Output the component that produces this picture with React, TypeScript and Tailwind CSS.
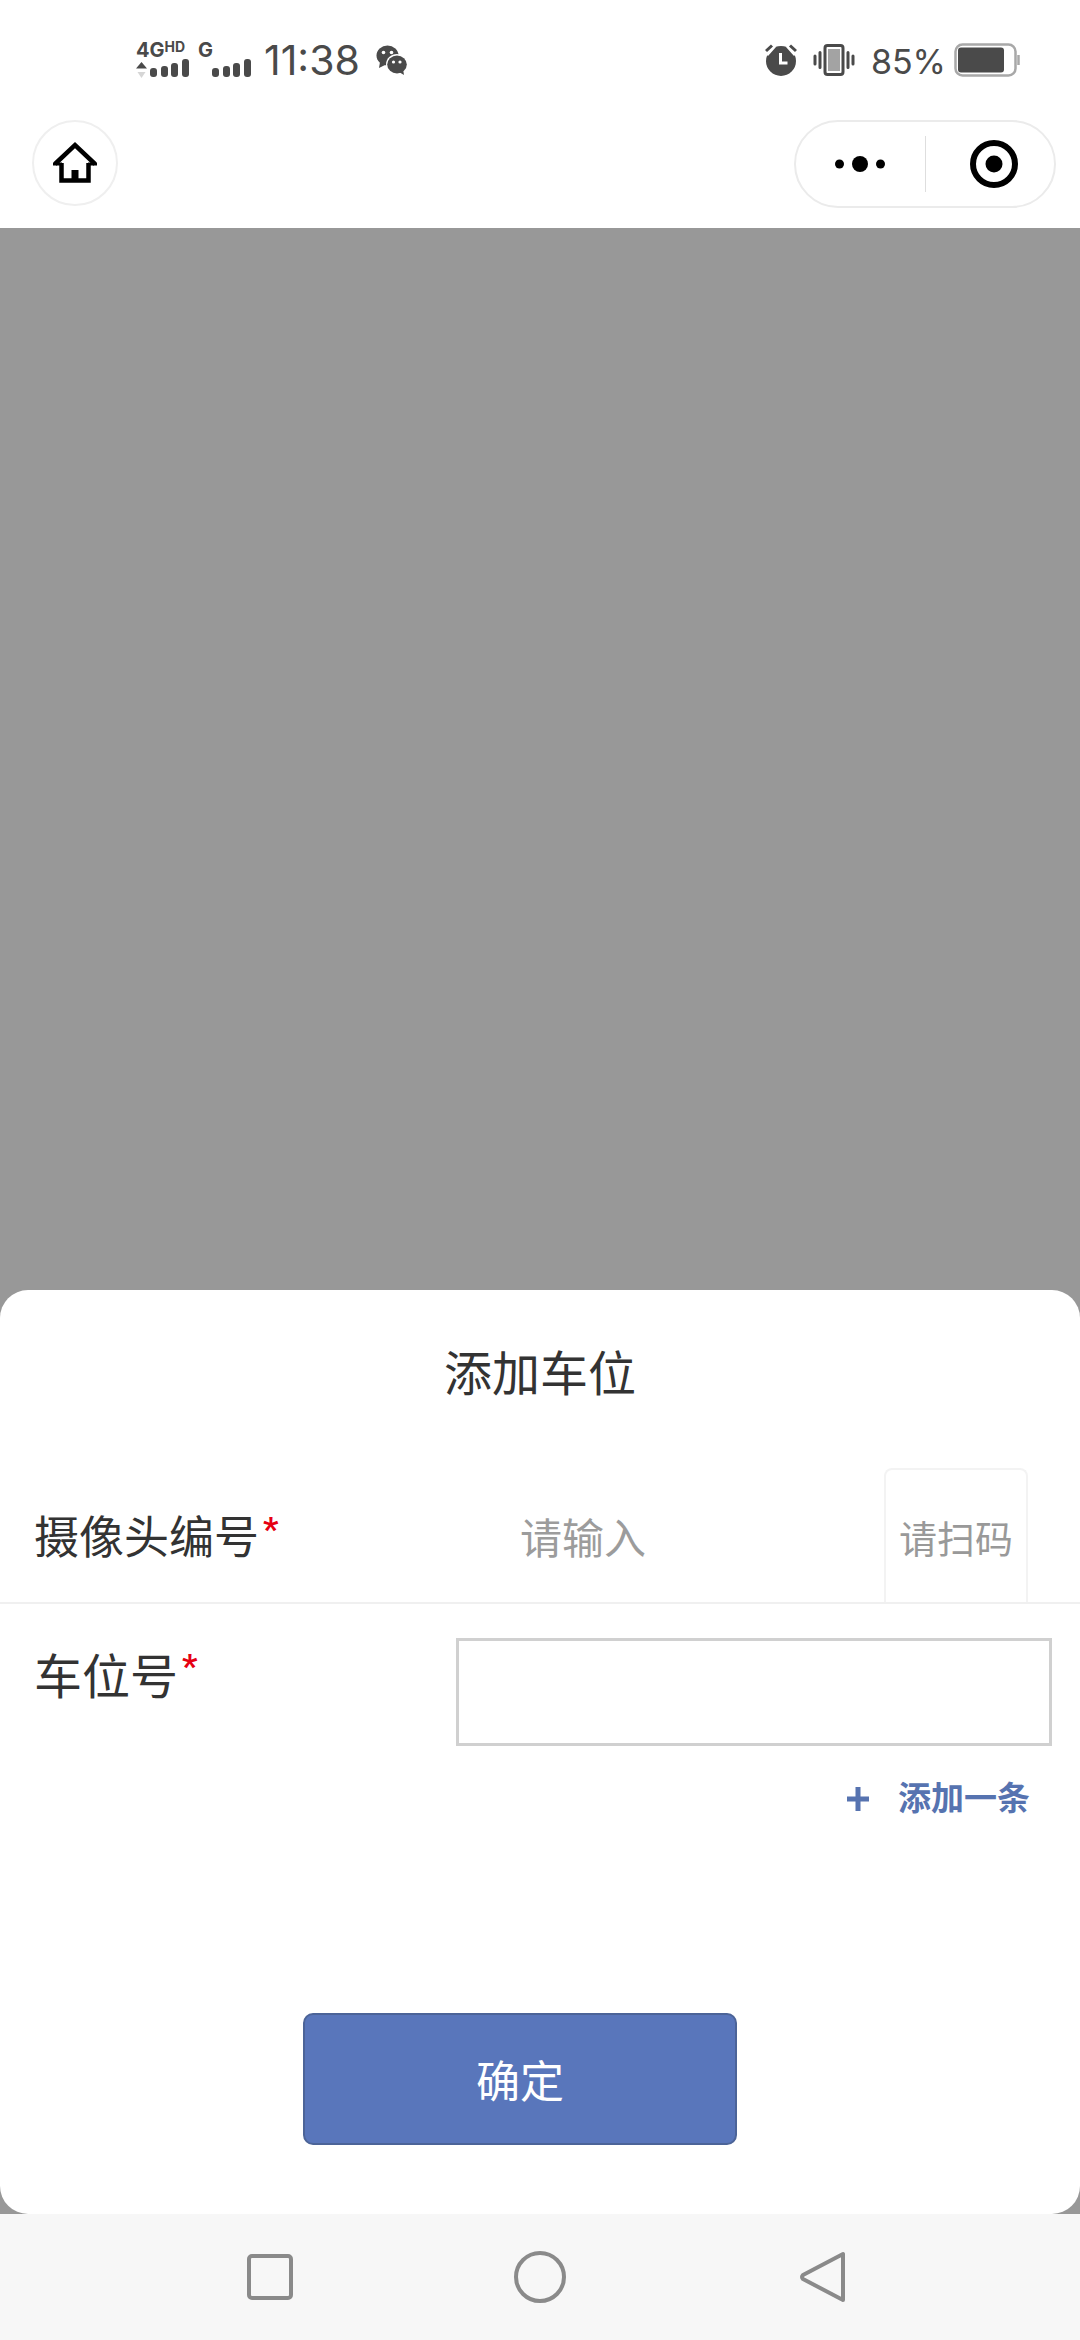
import { useState } from "react";

const font = "font-['Roboto','Noto_Sans_CJK_SC',sans-serif]";

function SignalBars({ arrows = false }: { arrows?: boolean }) {
    return (
        <svg className="h-5 w-[54px]" viewBox="0 0 54 20" fill="#4a4a4a" aria-hidden="true">
            {arrows && (
                <>
                    <path d="M0 9.5 5.5 3 11 9.5z" />
                    <path d="M1.5 13h8L5.5 19z" fill="#d6d6d6" />
                </>
            )}
            <rect x="14" y="9" width="7" height="9" rx="3" />
            <rect x="25" y="7" width="7" height="11" rx="3" />
            <rect x="35" y="4" width="7" height="14" rx="3" />
            <rect x="46" y="0" width="7" height="18" rx="3" />
        </svg>
    );
}

function WechatIcon() {
    return (
        <svg className="ml-2 h-[30px] w-8" viewBox="0 0 32 30" aria-hidden="true">
            <g fill="#4a4a4a">
                <ellipse cx="11.5" cy="10.5" rx="11" ry="10" />
                <path d="M4 17l-1 6 6-3z" />
            </g>
            <circle cx="7.5" cy="7.5" r="1.8" fill="#fff" />
            <circle cx="15.5" cy="7.5" r="1.8" fill="#fff" />
            <ellipse cx="21" cy="19.5" rx="11" ry="10.5" fill="#fff" />
            <g fill="#4a4a4a">
                <ellipse cx="21" cy="19.5" rx="9.8" ry="9" />
                <path d="M23 27l5 3-1-6z" />
            </g>
            <circle cx="17.5" cy="17" r="1.6" fill="#fff" />
            <circle cx="24" cy="17" r="1.6" fill="#fff" />
        </svg>
    );
}

function AlarmIcon() {
    return (
        <svg className="h-8 w-8" viewBox="0 0 32 32" fill="none" aria-hidden="true">
            <circle cx="16" cy="17" r="15" fill="#4a4a4a" />
            <path d="M0 9 8 0l3 3-8 9zM32 9l-8-9-3 3 8 9z" fill="#fff" />
            <path d="M1 7 7 1.5M25 1.5 31 7" stroke="#4a4a4a" strokeWidth="3" />
            <path d="M15.5 9v10h7" stroke="#fff" strokeWidth="3" />
        </svg>
    );
}

function VibrateIcon() {
    return (
        <svg className="h-8 w-[42px]" viewBox="0 0 42 32" fill="none" stroke="#4a4a4a" aria-hidden="true">
            <rect x="12" y="1.5" width="18" height="29" rx="2.5" strokeWidth="3" />
            <rect x="15" y="5" width="12" height="22" fill="#a3a3a3" stroke="none" />
            <path d="M7 8.5v15M35 8.5v15" strokeWidth="3" strokeLinecap="round" />
            <path d="M2 12v8M40 12v8" strokeWidth="3" strokeLinecap="round" />
        </svg>
    );
}

function BatteryIcon() {
    return (
        <svg className="h-[34px] w-[66px]" viewBox="0 0 66 34" fill="none" aria-hidden="true">
            <rect x="1.5" y="1.5" width="60" height="31" rx="7" stroke="#a8a8a8" strokeWidth="2.5" />
            <rect x="4" y="4.5" width="46" height="25" rx="3" fill="#4a4a4a" />
            <path d="M64.5 12v10" stroke="#a8a8a8" strokeWidth="2.5" />
        </svg>
    );
}

function StatusBar() {
    return (
        <div className="flex h-[120px] items-center justify-between pl-[136px] pr-[60px] font-['Inter',sans-serif] text-[#4a4a4a]">
            <div className="flex items-center gap-2">
                <div className="flex flex-col">
                    <div className="flex h-[18px] items-start text-xl leading-[18px] font-bold">
                        <span>4G</span>
                        <span className="text-sm leading-3">HD</span>
                    </div>
                    <SignalBars arrows />
                </div>
                <div className="flex flex-col">
                    <span className="h-[18px] text-xl leading-[18px] font-bold">G</span>
                    <SignalBars />
                </div>
                <span className="ml-1 text-[41px] leading-none">11:38</span>
                <WechatIcon />
            </div>
            <div className="flex items-center gap-2">
                <div className="flex items-center gap-4">
                    <AlarmIcon />
                    <VibrateIcon />
                    <span className="pt-1 text-[34px] leading-none">85%</span>
                </div>
                <BatteryIcon />
            </div>
        </div>
    );
}

function TitleBar() {
    return (
        <div className="flex h-[108px] items-start justify-between pr-6 pl-8">
            <button
                type="button"
                aria-label="首页"
                className="flex size-[86px] items-center justify-center rounded-full border-2 border-[#efefef]"
            >
                <svg className="size-11" viewBox="0 0 44 44" fill="none" stroke="#000" aria-hidden="true">
                    <path d="M8.5 22v17.5h27V22" strokeWidth="4.5" />
                    <path d="M2 23 22 4 42 23" strokeWidth="4.5" />
                    <path d="M0 23h9M35 23h9" strokeWidth="3" />
                    <path d="M22 29v10" strokeWidth="7" />
                </svg>
            </button>
            <div className="grid h-22 w-[262px] grid-cols-[1fr_1px_1fr] items-center rounded-full border-2 border-[#ebebeb]">
                <button type="button" aria-label="更多" className="flex h-full items-center justify-center">
                    <svg className="h-4 w-[50px]" viewBox="0 0 50 16" aria-hidden="true">
                        <circle cx="4.5" cy="8" r="4.5" />
                        <circle cx="25" cy="8" r="8" />
                        <circle cx="45.5" cy="8" r="4.5" />
                    </svg>
                </button>
                <span className="h-14 bg-[#dedede]" />
                <button type="button" aria-label="关闭" className="flex h-full items-center justify-center pl-2">
                    <svg className="size-12" viewBox="0 0 48 48" aria-hidden="true">
                        <circle cx="24" cy="24" r="21" fill="none" stroke="#000" strokeWidth="6" />
                        <circle cx="24" cy="24" r="8.5" />
                    </svg>
                </button>
            </div>
        </div>
    );
}

function Required() {
    return <span className="ml-1 self-start text-[34px] leading-10 font-bold text-[#e60012]">*</span>;
}

function AddSpaceSheet() {
    const [camera, setCamera] = useState("");
    const [spaces, setSpaces] = useState([""]);

    const updateSpace = (index: number, value: string) =>
        setSpaces(spaces.map((space, i) => (i === index ? value : space)));

    return (
        <form className="rounded-[28px] bg-white pb-[69px] text-[#333]" onSubmit={(e) => e.preventDefault()}>
            <h1 className="pt-12 text-center text-5xl leading-[74px]">添加车位</h1>

            {/* 摄像头编号 */}
            <div className="mt-14 flex h-[136px] items-stretch border-b-2 border-[#f0f0f0] pr-[52px] pl-[34px]">
                <label htmlFor="camera" className="flex w-[486px] items-center pt-2 text-[45px] leading-[60px]">
                    <span className="flex">
                        摄像头编号
                        <Required />
                    </span>
                </label>
                <input
                    id="camera"
                    value={camera}
                    onChange={(e) => setCamera(e.target.value)}
                    placeholder="请输入"
                    className="min-w-0 flex-1 pt-2 text-[42px] placeholder:text-[#9c9c9c] focus:outline-none"
                />
                <button
                    type="button"
                    className="w-36 rounded-t-lg border-2 border-b-0 border-[#f3f3f3] pt-2 text-[38px] text-[#999]"
                >
                    请扫码
                </button>
            </div>

            {/* 车位号 */}
            <div className="flex items-start pt-[34px] pr-7 pl-[34px]">
                <label htmlFor="space-0" className="flex w-[422px] pt-2 text-5xl leading-[64px]">
                    车位号
                    <Required />
                </label>
                <div className="flex min-w-0 flex-1 flex-col gap-4">
                    {spaces.map((space, i) => (
                        <input
                            key={i}
                            id={`space-${i}`}
                            aria-label="车位号"
                            value={space}
                            onChange={(e) => updateSpace(i, e.target.value)}
                            className="h-[108px] w-full border-[3px] border-[#d0d0d0] px-4 text-[42px] focus:outline-none"
                        />
                    ))}
                </div>
            </div>

            <div className="mt-6 flex justify-end pr-[50px]">
                <button
                    type="button"
                    onClick={() => setSpaces([...spaces, ""])}
                    className="flex items-center gap-7 text-[33px] leading-[58px] font-bold text-[#5673b0]"
                >
                    <svg className="size-6" viewBox="0 0 24 24" stroke="currentColor" strokeWidth="5" aria-hidden="true">
                        <path d="M12 0v24M1 12h22" />
                    </svg>
                    添加一条
                </button>
            </div>

            <div className="mt-[185px] flex justify-center pr-10">
                <button
                    type="submit"
                    className="h-[132px] w-[434px] rounded-[10px] border-2 border-[#4c6498] bg-[#5976bb] pt-2 text-[44px] text-white"
                >
                    确定
                </button>
            </div>
        </form>
    );
}

function NavBar() {
    return (
        <nav className="grid h-[126px] grid-cols-3 items-center bg-[#f7f7f7] px-[135px] text-[#8a8a8a]">
            <button type="button" aria-label="最近任务" className="flex justify-center">
                <svg className="size-[54px]" viewBox="0 0 54 54" fill="none" stroke="currentColor" strokeWidth="4">
                    <rect x="6" y="6" width="42" height="42" rx="3" />
                </svg>
            </button>
            <button type="button" aria-label="主屏幕" className="flex justify-center">
                <svg className="size-[54px]" viewBox="0 0 54 54" fill="none" stroke="currentColor" strokeWidth="4">
                    <circle cx="27" cy="27" r="24" />
                </svg>
            </button>
            <button type="button" aria-label="返回" className="flex justify-center pl-7">
                <svg
                    className="size-[54px]"
                    viewBox="0 0 54 54"
                    fill="none"
                    stroke="currentColor"
                    strokeWidth="4"
                    strokeLinejoin="round"
                >
                    <path d="M46 4v46L6 29q-2-2 0-4z" />
                </svg>
            </button>
        </nav>
    );
}

export default function App() {
    return (
        <div className={`flex min-h-screen flex-col bg-white ${font}`}>
            <header className="bg-white">
                <StatusBar />
                <TitleBar />
            </header>
            <main className="flex flex-1 flex-col justify-end bg-[#989898]">
                <AddSpaceSheet />
            </main>
            <NavBar />
        </div>
    );
}
